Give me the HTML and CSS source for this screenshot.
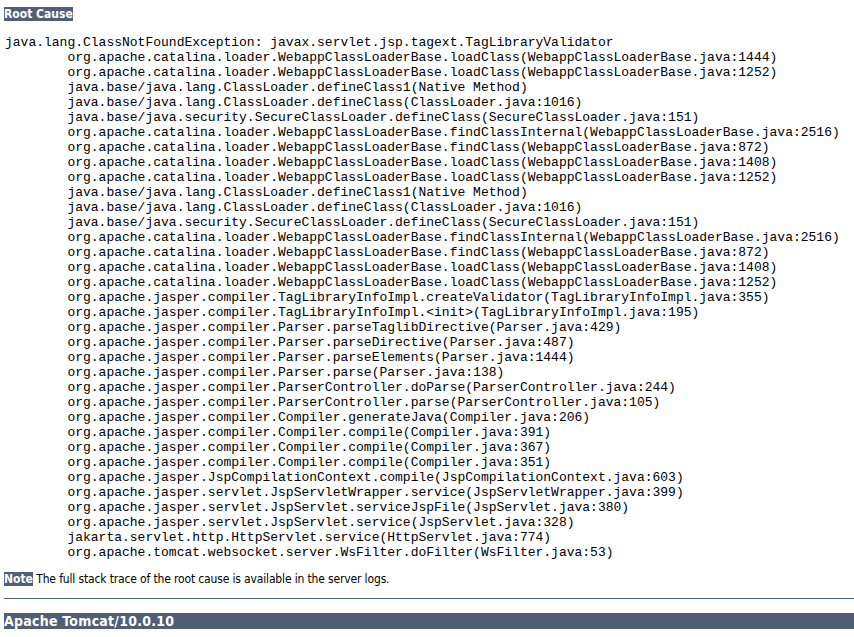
FILE: index.html
```html
<!DOCTYPE html>
<html lang="en">

<head>
    <meta charset="UTF-8">
    <title>HTTP Status 500 – Internal Server Error</title>
    <link rel="stylesheet" href="styles.css">
</head>

<body>
    <p class="first"><b>Root Cause</b></p>
<pre>java.lang.ClassNotFoundException: javax.servlet.jsp.tagext.TagLibraryValidator
        org.apache.catalina.loader.WebappClassLoaderBase.loadClass(WebappClassLoaderBase.java:1444)
        org.apache.catalina.loader.WebappClassLoaderBase.loadClass(WebappClassLoaderBase.java:1252)
        java.base/java.lang.ClassLoader.defineClass1(Native Method)
        java.base/java.lang.ClassLoader.defineClass(ClassLoader.java:1016)
        java.base/java.security.SecureClassLoader.defineClass(SecureClassLoader.java:151)
        org.apache.catalina.loader.WebappClassLoaderBase.findClassInternal(WebappClassLoaderBase.java:2516)
        org.apache.catalina.loader.WebappClassLoaderBase.findClass(WebappClassLoaderBase.java:872)
        org.apache.catalina.loader.WebappClassLoaderBase.loadClass(WebappClassLoaderBase.java:1408)
        org.apache.catalina.loader.WebappClassLoaderBase.loadClass(WebappClassLoaderBase.java:1252)
        java.base/java.lang.ClassLoader.defineClass1(Native Method)
        java.base/java.lang.ClassLoader.defineClass(ClassLoader.java:1016)
        java.base/java.security.SecureClassLoader.defineClass(SecureClassLoader.java:151)
        org.apache.catalina.loader.WebappClassLoaderBase.findClassInternal(WebappClassLoaderBase.java:2516)
        org.apache.catalina.loader.WebappClassLoaderBase.findClass(WebappClassLoaderBase.java:872)
        org.apache.catalina.loader.WebappClassLoaderBase.loadClass(WebappClassLoaderBase.java:1408)
        org.apache.catalina.loader.WebappClassLoaderBase.loadClass(WebappClassLoaderBase.java:1252)
        org.apache.jasper.compiler.TagLibraryInfoImpl.createValidator(TagLibraryInfoImpl.java:355)
        org.apache.jasper.compiler.TagLibraryInfoImpl.&lt;init&gt;(TagLibraryInfoImpl.java:195)
        org.apache.jasper.compiler.Parser.parseTaglibDirective(Parser.java:429)
        org.apache.jasper.compiler.Parser.parseDirective(Parser.java:487)
        org.apache.jasper.compiler.Parser.parseElements(Parser.java:1444)
        org.apache.jasper.compiler.Parser.parse(Parser.java:138)
        org.apache.jasper.compiler.ParserController.doParse(ParserController.java:244)
        org.apache.jasper.compiler.ParserController.parse(ParserController.java:105)
        org.apache.jasper.compiler.Compiler.generateJava(Compiler.java:206)
        org.apache.jasper.compiler.Compiler.compile(Compiler.java:391)
        org.apache.jasper.compiler.Compiler.compile(Compiler.java:367)
        org.apache.jasper.compiler.Compiler.compile(Compiler.java:351)
        org.apache.jasper.JspCompilationContext.compile(JspCompilationContext.java:603)
        org.apache.jasper.servlet.JspServletWrapper.service(JspServletWrapper.java:399)
        org.apache.jasper.servlet.JspServlet.serviceJspFile(JspServlet.java:380)
        org.apache.jasper.servlet.JspServlet.service(JspServlet.java:328)
        jakarta.servlet.http.HttpServlet.service(HttpServlet.java:774)
        org.apache.tomcat.websocket.server.WsFilter.doFilter(WsFilter.java:53)
</pre>
    <p><b>Note</b> The full stack trace of the root cause is available in the server logs.</p>
    <hr class="line">
    <h3>Apache Tomcat/10.0.10</h3>
</body>

</html>
```

FILE: styles.css
```css
body {
    font-family: "DejaVu Sans Condensed", "DejaVu Sans", sans-serif;
    color: black;
    background-color: white;
    margin: 0 0 0 4px;
}

b {
    font-family: "DejaVu Sans Condensed", "DejaVu Sans", sans-serif;
    color: white;
    background-color: #525D76;
    letter-spacing: 0;
}

p {
    font-family: "DejaVu Sans Condensed", "DejaVu Sans", sans-serif;
    background: white;
    color: black;
    font-size: 12px;
    line-height: 14px;
    letter-spacing: -0.15px;
    margin: 12px 0;
}

p.first {
    margin-top: 7px;
}

pre {
    font-family: "Liberation Mono", monospace;
    font-size: 13px;
    line-height: 15px;
    margin: 14px 0 12px 1px;
}

.line {
    height: 1px;
    background-color: #525D76;
    border: none;
    margin: 11px 0 12px;
}

h3 {
    font-family: "DejaVu Sans Condensed", "DejaVu Sans", sans-serif;
    color: white;
    background-color: #525D76;
    font-size: 14px;
    line-height: 16px;
    letter-spacing: 0.25px;
    margin: 14px 0;
}
```
